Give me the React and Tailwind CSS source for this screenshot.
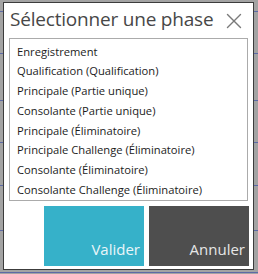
import { X } from 'lucide-react';

const phases = [
  'Enregistrement',
  'Qualification (Qualification)',
  'Principale (Partie unique)',
  'Consolante (Partie unique)',
  'Principale (Éliminatoire)',
  'Principale Challenge (Éliminatoire)',
  'Consolante (Éliminatoire)',
  'Consolante Challenge (Éliminatoire)',
];

const lines = [11, 53, 100, 142, 185, 230, 272];

export default function App() {
  return (
    <div
      className="relative w-[258px] h-[274px] overflow-hidden bg-[#a3a3a3]"
      style={{ fontFamily: '"Open Sans", "Noto Sans", sans-serif' }}
    >
      {/* table lines behind the dialog */}
      <div className="flex flex-col">
        {lines.map((y, i) => (
          <div
            key={y}
            className="h-px bg-[#5d6aa6] shrink-0"
            style={{ marginTop: i === 0 ? y : y - lines[i - 1] - 1 }}
          />
        ))}
      </div>

      <div className="absolute left-[3px] top-[2px] w-[251px] h-[268px] border border-[#3c3c3c] bg-white flex flex-col">
        <div className="flex items-center justify-between h-[33px] pl-[6px] pr-[6px]">
          <h1 className="text-[19px] leading-none text-[#474747] tracking-[-0.2px]">
            Sélectionner une phase
          </h1>
          <X size={26} strokeWidth={1.3} className="text-[#7a7a7a] mt-[2px]" />
        </div>

        <div className="mx-[5px] mt-[2px] h-[163px] border border-[#ababab] pt-[3px] pl-[7px]">
          {phases.map((p) => (
            <div key={p} className="h-[19.8px] flex items-center text-[11.2px] text-[#1c1c1c] whitespace-nowrap">
              {p}
            </div>
          ))}
        </div>

        <div className="flex justify-end gap-[5px] mt-[5px] pr-[4px]">
          <button className="w-[100px] h-[60px] bg-[#36b1c9] flex items-end justify-end pr-[4px] pb-[9px] text-[15px] leading-none text-[#eaf6f9]">
            Valider
          </button>
          <button className="w-[100px] h-[60px] bg-[#4e4e4e] flex items-end justify-end pr-[4px] pb-[9px] text-[15px] leading-none text-[#e6e6e6]">
            Annuler
          </button>
        </div>
      </div>
    </div>
  );
}
